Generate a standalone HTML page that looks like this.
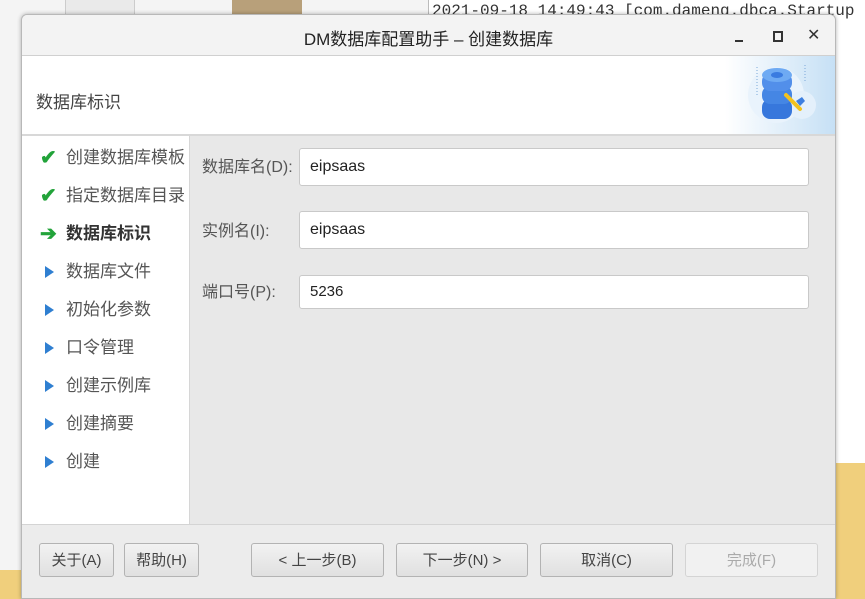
<!DOCTYPE html>
<html><head><meta charset="utf-8"><style>
body{margin:0;width:865px;height:599px;position:relative;overflow:hidden;background:#f4f4f4;font-family:"Liberation Sans","Noto Sans CJK SC",sans-serif;}
.abs{position:absolute}
.win{left:21px;top:14px;width:813px;height:583px;background:#e8e8e8;border:1px solid #b8b8b8;border-radius:6px 6px 0 0;overflow:hidden;box-shadow:0 0 4px rgba(0,0,0,.3)}
.lab{font-size:16px;color:#555}
.inp{background:#fff;border:1px solid #c9c9c9;border-radius:3px;left:277px;width:510px;font-size:16px;color:#222;box-sizing:border-box;padding-left:10px}
.nav{left:18px;font-size:17px;color:#555;white-space:nowrap}
.nav i{display:inline-block;width:26px;font-style:normal;font-size:20px;vertical-align:-1px}
.tri{display:inline-block;width:0;height:0;border-left:9px solid #2f7fd1;border-top:6px solid transparent;border-bottom:6px solid transparent;margin:0 12px 0 5px;vertical-align:-1px}
.btn{top:528px;height:34px;border:1px solid #b3b3b3;border-radius:3px;background:linear-gradient(#f2f2f2,#e0e0e0);font-size:15px;color:#444;text-align:center;line-height:34px;box-sizing:border-box}
</style></head><body>
<div class="abs" style="left:428px;top:0;width:437px;height:463px;background:#fff;border-left:1px solid #bbb"></div>
<div class="abs" style="left:432px;top:1px;font-family:'Liberation Mono',monospace;font-size:16px;color:#333;white-space:nowrap;line-height:20px">2021-09-18 14:49:43 [com.dameng.dbca.Startup</div>
<div class="abs" style="left:835px;top:463px;width:30px;height:136px;background:#f0cf7c"></div>
<div class="abs" style="left:0;top:570px;width:21px;height:29px;background:#f0cf7c"></div>
<div class="abs" style="left:232px;top:0;width:70px;height:14px;background:#b8a07a"></div>
<div class="abs" style="left:65px;top:0;width:68px;height:14px;background:#eaeaea;border-right:1px solid #ccc;border-left:1px solid #ccc"></div>
<div class="abs win">
 <div class="abs" style="left:0;top:0;width:813px;height:40px;background:#f3f3f3;border-bottom:1px solid #d0d0d0"></div>
 <div class="abs" style="left:0;top:10px;width:813px;text-align:center;font-size:17px;color:#222">DM数据库配置助手 – 创建数据库</div>
 <div class="abs" style="left:713px;top:25px;width:8px;height:2px;background:#333"></div>
 <div class="abs" style="left:751px;top:16px;width:6px;height:7px;border:2px solid #333"></div>
 <div class="abs" style="left:785px;top:10px;font-size:16px;color:#333">✕</div>
 <div class="abs" style="left:0;top:41px;width:813px;height:78px;background:#fff;border-bottom:2px solid #d8d8d8"></div>
 <div class="abs" style="left:703px;top:41px;width:110px;height:78px;background:linear-gradient(90deg,#fff,#c6e0f5)"></div>
 <svg class="abs" style="left:718px;top:42px" width="90" height="76" viewBox="0 0 90 76">
  <circle cx="36" cy="38" r="28" fill="#e9f3fc"/>
  <circle cx="62" cy="48" r="14" fill="#e4f0fb"/>
  <line x1="17" y1="10" x2="17" y2="40" stroke="#7aa8d8" stroke-dasharray="1 2"/>
  <line x1="65" y1="8" x2="65" y2="26" stroke="#7aa8d8" stroke-dasharray="1 2"/>
  <rect x="22" y="42" width="30" height="20" rx="8" fill="#3777dc"/>
  <rect x="22" y="29" width="30" height="18" rx="8" fill="#4586e4"/>
  <rect x="22" y="16" width="30" height="18" rx="8" fill="#528fea"/>
  <ellipse cx="37" cy="18" rx="15" ry="7" fill="#6eaaf3"/><ellipse cx="37" cy="18" rx="6" ry="3" fill="#3a7be0"/>
  <path d="M46 38 L60 52" stroke="#f2c21e" stroke-width="4" stroke-linecap="round"/>
  <path d="M56 44 l6 -4 l3 4 l-5 5z" fill="#3d7fe0"/>
 </svg>
 <div class="abs" style="left:14px;top:73px;font-size:17px;color:#444">数据库标识</div>
 <div class="abs" style="left:0;top:121px;width:167px;height:388px;background:#fff;border-right:1px solid #d6d6d6"></div>
 <div class="abs nav" style="top:128px"><i style="color:#22a33a;font-weight:bold">✔</i>创建数据库模板</div>
 <div class="abs nav" style="top:166px"><i style="color:#22a33a;font-weight:bold">✔</i>指定数据库目录</div>
 <div class="abs nav" style="top:204px;font-weight:bold;color:#333"><i style="color:#22a33a">➔</i>数据库标识</div>
 <div class="abs nav" style="top:242px"><span class="tri"></span>数据库文件</div>
 <div class="abs nav" style="top:280px"><span class="tri"></span>初始化参数</div>
 <div class="abs nav" style="top:318px"><span class="tri"></span>口令管理</div>
 <div class="abs nav" style="top:356px"><span class="tri"></span>创建示例库</div>
 <div class="abs nav" style="top:394px"><span class="tri"></span>创建摘要</div>
 <div class="abs nav" style="top:432px"><span class="tri"></span>创建</div>
 <div class="abs lab" style="left:180px;top:138px">数据库名(D):</div>
 <div class="abs inp" style="top:133px;height:38px;line-height:36px">eipsaas</div>
 <div class="abs lab" style="left:180px;top:202px">实例名(I):</div>
 <div class="abs inp" style="top:196px;height:38px;line-height:36px">eipsaas</div>
 <div class="abs lab" style="left:180px;top:263px">端口号(P):</div>
 <div class="abs inp" style="top:260px;height:34px;line-height:32px;font-size:15px">5236</div>
 <div class="abs" style="left:0;top:509px;width:813px;height:74px;background:#ececec;border-top:1px solid #d4d4d4"></div>
 <div class="abs btn" style="left:17px;width:75px">关于(A)</div>
 <div class="abs btn" style="left:102px;width:75px">帮助(H)</div>
 <div class="abs btn" style="left:229px;width:133px">&lt; 上一步(B)</div>
 <div class="abs btn" style="left:374px;width:132px">下一步(N) &gt;</div>
 <div class="abs btn" style="left:518px;width:133px">取消(C)</div>
 <div class="abs btn" style="left:663px;width:133px;background:#f1f1f1;color:#aaa;border-color:#d4d4d4">完成(F)</div>
</div>
</body></html>
